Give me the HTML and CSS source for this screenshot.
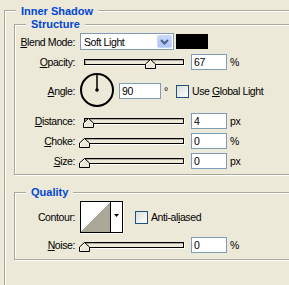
FILE: index.html
```html
<!DOCTYPE html>
<html lang="en">
    <head>
        <meta charset="UTF-8">
        <meta name="viewport" content="width=device-width, initial-scale=1.0">
        <title>Layer Style - Inner Shadow</title>
        <link rel="stylesheet" href="styles.css">
    </head>
    <body>
        <fieldset class="group outer">
            <legend>Inner Shadow</legend>

            <fieldset class="group inner structure">
                <legend>Structure</legend>

                <div class="row row-blend">
                    <label class="lbl"><u>B</u>lend Mode:</label>
                    <div class="combo">
                        <span class="combo-text">Soft Light</span>
                        <span class="combo-btn">
                            <svg width="9" height="6" viewBox="0 0 9 6"><polyline points="1,1 4.5,4.5 8,1" fill="none" stroke="#4d6185" stroke-width="2"/></svg>
                        </span>
                    </div>
                    <div class="swatch"></div>
                </div>

                <div class="row">
                    <label class="lbl"><u>O</u>pacity:</label>
                    <div class="slider">
                        <div class="track"></div>
                        <svg class="thumb" style="left: 66px" width="11" height="10" viewBox="0 0 11 10"><polygon points="0.5,5 5.5,0.5 10.5,5 10.5,9.5 0.5,9.5" fill="#ece9d8" stroke="#000"/><polyline points="1.5,9 1.5,5.4 5.5,1.8" fill="none" stroke="#fff"/></svg>
                    </div>
                    <input class="num" type="text" value="67">
                    <span class="unit">%</span>
                </div>

                <div class="row row-angle">
                    <label class="lbl"><u>A</u>ngle:</label>
                    <svg class="dial" width="34" height="34" viewBox="0 0 34 34">
                        <circle cx="17" cy="17" r="16" fill="none" stroke="#000" stroke-width="2"/>
                        <line x1="17" y1="17" x2="17" y2="1.5" stroke="#000" stroke-width="1.5"/>
                        <circle cx="17" cy="17" r="1.8" fill="#000"/>
                    </svg>
                    <div class="angle-fields">
                        <input class="num angle-num" type="text" value="90">
                        <span class="deg">°</span>
                        <label class="check"><span class="box"></span><span>Use <u>G</u>lobal Light</span></label>
                    </div>
                </div>

                <div class="row row-distance">
                    <label class="lbl"><u>D</u>istance:</label>
                    <div class="slider">
                        <div class="track"></div>
                        <svg class="thumb" style="left: 4px" width="11" height="10" viewBox="0 0 11 10"><polygon points="0.5,5 5.5,0.5 10.5,5 10.5,9.5 0.5,9.5" fill="#ece9d8" stroke="#000"/><polyline points="1.5,9 1.5,5.4 5.5,1.8" fill="none" stroke="#fff"/></svg>
                    </div>
                    <input class="num" type="text" value="4">
                    <span class="unit">px</span>
                </div>

                <div class="row">
                    <label class="lbl"><u>C</u>hoke:</label>
                    <div class="slider">
                        <div class="track"></div>
                        <svg class="thumb" style="left: 0px" width="11" height="10" viewBox="0 0 11 10"><polygon points="0.5,5 5.5,0.5 10.5,5 10.5,9.5 0.5,9.5" fill="#ece9d8" stroke="#000"/><polyline points="1.5,9 1.5,5.4 5.5,1.8" fill="none" stroke="#fff"/></svg>
                    </div>
                    <input class="num" type="text" value="0">
                    <span class="unit">%</span>
                </div>

                <div class="row">
                    <label class="lbl"><u>S</u>ize:</label>
                    <div class="slider">
                        <div class="track"></div>
                        <svg class="thumb" style="left: 0px" width="11" height="10" viewBox="0 0 11 10"><polygon points="0.5,5 5.5,0.5 10.5,5 10.5,9.5 0.5,9.5" fill="#ece9d8" stroke="#000"/><polyline points="1.5,9 1.5,5.4 5.5,1.8" fill="none" stroke="#fff"/></svg>
                    </div>
                    <input class="num" type="text" value="0">
                    <span class="unit">px</span>
                </div>
            </fieldset>

            <fieldset class="group inner quality">
                <legend>Quality</legend>

                <div class="row row-contour">
                    <label class="lbl">Contour:</label>
                    <div class="contour">
                        <div class="contour-preview"></div>
                        <div class="contour-btn">
                            <svg width="5" height="3" viewBox="0 0 5 3"><polygon points="0,0 5,0 2.5,3" fill="#000"/></svg>
                        </div>
                    </div>
                    <label class="check"><span class="box"></span><span>Anti-al<u>i</u>ased</span></label>
                </div>

                <div class="row">
                    <label class="lbl"><u>N</u>oise:</label>
                    <div class="slider">
                        <div class="track"></div>
                        <svg class="thumb" style="left: 0px" width="11" height="10" viewBox="0 0 11 10"><polygon points="0.5,5 5.5,0.5 10.5,5 10.5,9.5 0.5,9.5" fill="#ece9d8" stroke="#000"/><polyline points="1.5,9 1.5,5.4 5.5,1.8" fill="none" stroke="#fff"/></svg>
                    </div>
                    <input class="num" type="text" value="0">
                    <span class="unit">%</span>
                </div>
            </fieldset>
        </fieldset>
    </body>
</html>
```

FILE: styles.css
```css
html,
body {
    margin: 0;
    overflow: hidden;
}

body {
    background-color: #ece9d8;
    font-family: 'Liberation Sans', Arial, sans-serif;
    font-size: 10.5px;
    letter-spacing: -0.4px;
    line-height: 13px;
    color: #000;
    height: 285px;
}

/* group boxes (the window cuts them off on the right) */
.group {
    box-sizing: border-box;
    margin: 0;
    padding: 0;
    min-width: 0;
    border: 1px solid #aca899;
    border-right: 0;
    box-shadow: inset 1px 1px #fff, 1px 1px #fff;
}

.group > legend {
    margin-left: 11px;
    padding: 0 5px;
    background-color: #ece9d8;
    color: #0046d5;
    font-size: 11px;
    font-weight: bold;
    letter-spacing: 0;
    line-height: 13px;
}

.outer {
    margin: 3px 0 0 4px;
    width: 285px;
    height: 282px;
    border-bottom: 0;
}

.outer > legend {
    padding-top: 2px;
}

.inner {
    margin-left: 9px;
    width: 275px;
    padding: 2px 0 5px;
}

.quality {
    margin-top: 11px;
    padding-bottom: 6px;
}

/* rows */
.row {
    display: flex;
    align-items: center;
    height: 16px;
    margin-top: 4px;
}

.row-blend {
    height: 17px;
    margin-top: 0;
}

.row-blend .lbl {
    padding-top: 2px;
}

.row-angle {
    height: 34px;
    align-items: flex-start;
    margin-top: 3px;
}

.row-angle .lbl {
    margin-top: 10px;
    line-height: 16px;
}

.row-distance {
    margin-top: 6px;
}

.row-contour {
    height: 32px;
    margin-top: 0;
}

.lbl {
    flex: none;
    width: 60px;
    text-align: right;
}

/* blend mode combo */
.combo {
    flex: none;
    box-sizing: border-box;
    margin-left: 5px;
    width: 94px;
    height: 17px;
    border: 1px solid #7f9db9;
    background-color: #fff;
    display: flex;
    align-items: center;
    justify-content: space-between;
}

.combo-text {
    padding: 2px 0 0 3px;
}

.combo-btn {
    box-sizing: border-box;
    width: 15px;
    height: 13px;
    margin-right: 1px;
    border: 1px solid #c8d7fb;
    border-radius: 2px;
    background: linear-gradient(#c9d8fd, #aec5f7);
    display: flex;
    align-items: center;
    justify-content: center;
}

.swatch {
    flex: none;
    margin-left: 2px;
    width: 32px;
    height: 15px;
    background-color: #000;
}

/* sliders */
.slider {
    position: relative;
    flex: none;
    margin-left: 4px;
    width: 110px;
    height: 16px;
}

.track {
    box-sizing: border-box;
    margin: 5px 5px 0;
    width: 100px;
    height: 6px;
    border: 1px solid #000;
    background-color: #ece9d8;
    box-shadow: inset 1px 1px #aca899, 1px 1px #fff;
}

.thumb {
    position: absolute;
    top: 5px;
}

.num {
    flex: none;
    box-sizing: border-box;
    margin: 0 0 0 2px;
    width: 36px;
    height: 16px;
    padding: 0 2px;
    border: 1px solid #7f9db9;
    background-color: #fff;
    color: #000;
    font: inherit;
    letter-spacing: inherit;
    outline: none;
}

.unit {
    margin-left: 3px;
}

/* angle */
.dial {
    flex: none;
    margin-left: 5px;
}

.angle-fields {
    display: flex;
    align-items: center;
    height: 16px;
    margin-top: 10px;
}

.angle-num {
    margin-left: 5px;
    width: 42px;
}

.deg {
    flex: none;
    box-sizing: border-box;
    width: 15px;
    padding-left: 3px;
}

/* checkboxes */
.check {
    display: flex;
    align-items: center;
    white-space: nowrap;
}

.box {
    flex: none;
    box-sizing: border-box;
    width: 13px;
    height: 13px;
    margin-right: 3px;
    border: 1px solid #1c5180;
    background: linear-gradient(135deg, #dcdcd7, #fff);
}

/* contour picker */
.contour {
    flex: none;
    box-sizing: border-box;
    display: flex;
    margin-left: 5px;
    width: 43px;
    height: 32px;
    border: 1px solid #000;
    background-color: #fff;
    box-shadow: 1px 1px #fff;
}

.contour-preview {
    width: 29px;
    background: linear-gradient(to top left, #aca899 50%, #fff 50%);
}

.contour-btn {
    width: 11px;
    border-left: 1px solid #000;
    display: flex;
    justify-content: center;
    align-items: flex-start;
    padding-top: 12px;
    box-sizing: content-box;
    height: 18px;
}

.row-contour .check {
    margin-left: 12px;
}
```
